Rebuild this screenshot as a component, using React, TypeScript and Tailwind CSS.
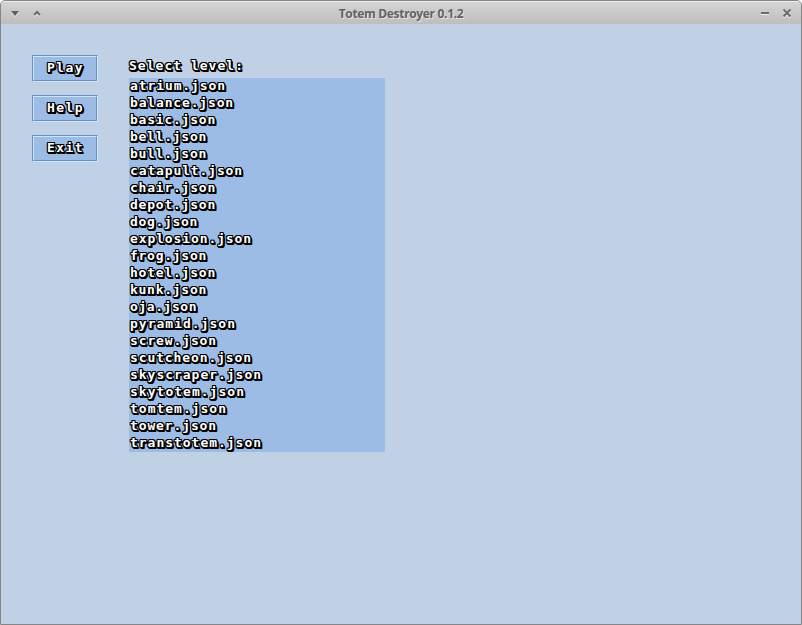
import React from "react";

type Level = { name: string; width: number };

const levels: Level[] = [
  { name: "atrium.json", width: 96 },
  { name: "balance.json", width: 104 },
  { name: "basic.json", width: 86 },
  { name: "bell.json", width: 77 },
  { name: "bull.json", width: 77 },
  { name: "catapult.json", width: 113 },
  { name: "chair.json", width: 86 },
  { name: "depot.json", width: 86 },
  { name: "dog.json", width: 68 },
  { name: "explosion.json", width: 122 },
  { name: "frog.json", width: 77 },
  { name: "hotel.json", width: 86 },
  { name: "kunk.json", width: 77 },
  { name: "oja.json", width: 67 },
  { name: "pyramid.json", width: 106 },
  { name: "screw.json", width: 87 },
  { name: "scutcheon.json", width: 122 },
  { name: "skyscraper.json", width: 132 },
  { name: "skytotem.json", width: 115 },
  { name: "tomtem.json", width: 97 },
  { name: "tower.json", width: 87 },
  { name: "transtotem.json", width: 132 },
];

const ADVANCE = 13 * 0.602;

function GameText({ text, width }: { text: string; width: number }) {
  return (
    <span
      className="block whitespace-pre font-['DejaVu_Sans_Mono',monospace] text-[13px] leading-[15px] font-bold text-white [text-shadow:-1px_0_0_#000,0_-1px_0_#000,1px_0_0_#000,0_1px_0_#000,1px_1px_0_#000,2px_1px_0_#000,1px_2px_0_#000,2px_2px_0_#000,-1px_1px_0_#000,1px_-1px_0_#000,-1px_-1px_0_#000,0_2px_0_#000]"
      style={{ width, letterSpacing: (width - text.length * ADVANCE) / text.length }}
    >
      {text}
    </span>
  );
}

function MenuButton({ label }: { label: string }) {
  return (
    <button className="flex h-[27px] w-[66px] border border-t-[#6b8fc0] border-l-[#6b8fc0] border-r-[#c8e8ff] border-b-[#c8e8ff]">
      <span className="flex h-[25px] w-16 border border-t-[#c8e8ff] border-l-[#c8e8ff] border-r-[#6b8fc0] border-b-[#6b8fc0] bg-[#9cbbe5] pt-[3px] pl-[13px]">
        <GameText text={label} width={37} />
      </span>
    </button>
  );
}

export default function App() {
  return (
    <div className="flex h-[625px] w-[802px] flex-col overflow-hidden rounded-t-[5px] border border-[#858585] bg-[#c0d0e5]">
      <header className="flex h-[23px] shrink-0 items-center border-t border-[#eeeeee] bg-linear-to-b from-[#d4d4d4] to-[#bebebe]">
        <svg width="60" height="22" className="shrink-0">
          <path d="M10 10h8l-4 5z" fill="#f0f0f0" />
          <path d="M10 9h8l-4 5z" fill="#606060" />
          <path d="M33 14l3-3 3 3" fill="none" stroke="#f0f0f0" strokeWidth="2" />
          <path d="M33 13l3-3 3 3" fill="none" stroke="#6c6c6c" strokeWidth="2" />
        </svg>
        <h1 className="grow pt-[2px] text-center font-['Open_Sans',sans-serif] text-[12px] leading-[22px] font-bold tracking-[-0.33px] text-[#626264] [text-shadow:1px_1px_0_#e4e4e4]">
          Totem Destroyer 0.1.2
        </h1>
        <svg width="60" height="22" className="shrink-0">
          <path d="M20 12.5h8" stroke="#f0f0f0" />
          <path d="M20 11h8" stroke="#6c6c6c" strokeWidth="2" />
          <path d="M42.5 8.5l7 7m0-7l-7 7" stroke="#f0f0f0" strokeWidth="2" />
          <path d="M42.5 7.5l7 7m0-7l-7 7" stroke="#6c6c6c" strokeWidth="2" />
        </svg>
      </header>
      <main className="flex pt-[31px] pl-[31px]">
        <nav className="flex w-[97px] flex-col gap-[13px]">
          <MenuButton label="Play" />
          <MenuButton label="Help" />
          <MenuButton label="Exit" />
        </nav>
        <section>
          <h2 className="h-[23px] pt-[3px]">
            <GameText text="Select level:" width={115} />
          </h2>
          <ul className="h-[374px] w-64 bg-[#9cbbe5] pl-[1px]">
            {levels.map((level) => (
              <li key={level.name} className="h-[17px]">
                <GameText text={level.name} width={level.width} />
              </li>
            ))}
          </ul>
        </section>
      </main>
    </div>
  );
}
